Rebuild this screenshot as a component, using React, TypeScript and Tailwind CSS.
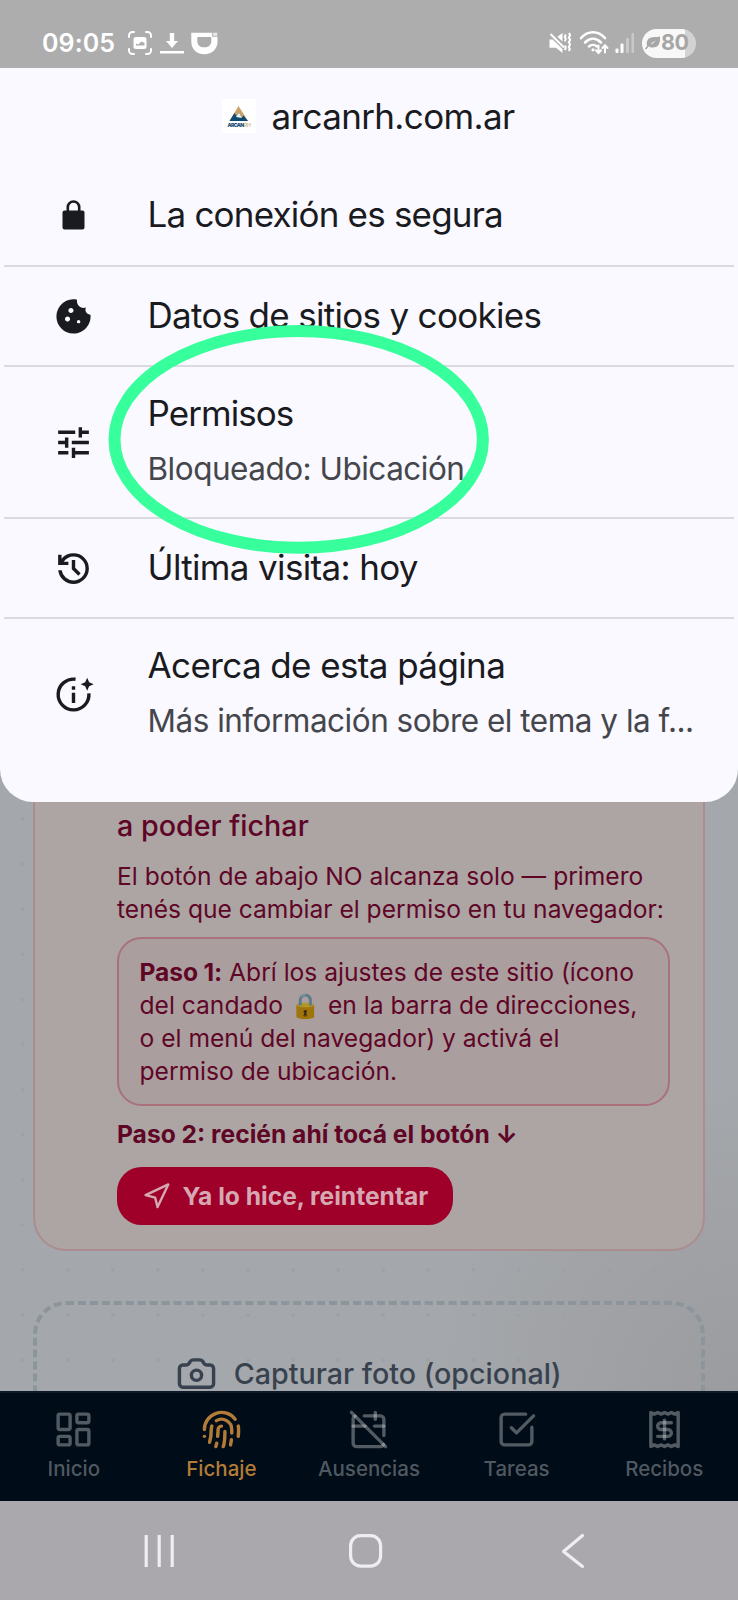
import type { ReactNode } from "react";
import {
  LayoutDashboard,
  Fingerprint,
  CalendarOff,
  SquareCheckBig,
  Receipt,
  Camera,
  Navigation,
} from "lucide-react";
import { MdCookie, MdTune } from "react-icons/md";

function StatusBar() {
  return (
    <header className="flex h-[68px] shrink-0 items-center justify-between bg-[#adadad] pt-[18px] pr-[42px] pl-[42px] text-white">
      <div className="flex items-center">
        <span className="w-[86px] text-[25px] leading-none font-semibold tracking-[0.100px] whitespace-nowrap">09:05</span>
        <svg width="24" height="24" viewBox="0 0 24 24" fill="none" stroke="currentColor" strokeWidth="2" strokeLinecap="round">
          <path d="M1 6V4.500a3.500 3.500 0 0 1 3.500-3.500H6M18 1h1.500A3.500 3.500 0 0 1 23 4.500V6M23 18v1.500a3.500 3.500 0 0 1-3.500 3.500H18M6 23H4.500A3.500 3.500 0 0 1 1 19.500V18" />
          <rect x="5.500" y="6" width="13" height="12" rx="2.500" fill="currentColor" stroke="none" />
          <path d="M8 14.500v-2l2.200 1 3.300-3 3 1.500v2.500z" fill="#adadad" stroke="none" />
        </svg>
        <svg className="ml-[8px]" width="24" height="24" viewBox="0 0 24 24" fill="currentColor">
          <path d="M9.800 2h4.400v8H18l-6 7-6-7h3.800z" />
          <rect x="0" y="20" width="24" height="2.500" />
        </svg>
        <svg className="ml-[6.500px]" width="27" height="24" viewBox="0 0 27 24" fill="currentColor">
          <path fillRule="evenodd" d="M.3 1.700H21.200V5.800H26.500V10.500C26.500 18 21 23.300 13.300 23.300 5.500 23.300.3 18 .3 10.500ZM6.300 6V10c0 4.200 2.700 6.300 7 6.300s7-2.100 7-6.300V6Z" />
          <path d="M22.200 1.700h4v3.100h-4z" opacity=".75" />
        </svg>
      </div>
      <div className="flex items-center">
        <svg width="22" height="22" viewBox="0 0 22 22" fill="currentColor">
          <path d="M.5 7.500h3.200L13.500 17V21L7 15.800H.5zM8.500 4.800 13.500 1v8.500z" />
          <path d="M1.500 2 15 15.500" stroke="currentColor" strokeWidth="2" />
          <path d="m20 1 1.200 2.300L19.800 5.600l1.400 2.300-1.400 2.300 1.400 2.300-1.400 2.300 1 2.200-1 2M16.800 2.500l-1 2.300 1 2.300-1 2.300M15.800 13.500l1 2.300-1 2.200" fill="none" stroke="currentColor" strokeWidth="2" />
        </svg>
        <svg className="ml-[8px]" width="31" height="24" viewBox="0 0 31 24" fill="none" stroke="currentColor" strokeWidth="2.500" strokeLinecap="round">
          <path d="M2 7.200C9-.6 19-.6 26 7.200M6 11.500c5-5 11-5 16 0M10 15.500c2.300-2 5.700-2 8 0" />
          <circle cx="14" cy="18.800" r="1.600" fill="currentColor" stroke="none" />
          <path d="M19.500 14.500v7M17 19.300l2.500 2.700 2.500-2.700M26 21.500v-6.500M23.500 17l2.500-2.700 2.500 2.700" strokeWidth="2" />
        </svg>
        <svg className="ml-[5px]" width="20" height="22" viewBox="0 0 20 22" fill="currentColor">
          <rect x="0.500" y="16.500" width="3" height="4.500" rx="1" />
          <rect x="5.500" y="11.500" width="3" height="9.500" rx="1" />
          <rect x="11" y="6" width="3" height="15" rx="1" opacity=".35" />
          <rect x="16.500" y="1" width="2.500" height="20" rx="1" opacity=".35" />
        </svg>
        <div className="ml-[7px] flex h-[29px] w-[54px] items-center overflow-hidden rounded-full bg-linear-to-r from-[#f8f8f8] from-80% to-[#d3d3d3] to-80% pl-[3px] text-[#a6a6a6]">
          <svg width="16" height="16" viewBox="0 0 16 16" fill="currentColor">
            <path d="M15 1.500C15.500 9 13 13 7 12.500c-1.500 0-2.500-.5-3.300-1C6 9.500 8.500 8 11 5.500 7 7.500 4.500 9 2.200 11.200.7 6 3 2.500 8 2.200 11 2 13 2 15 1.500z" />
            <path d="M.5 14c1.300-2 3.500-4 6-5.500" stroke="currentColor" strokeWidth="1.500" />
          </svg>
          <span className="text-[21.500px] leading-none font-bold tracking-[-0.400px]">80</span>
        </div>
      </div>
    </header>
  );
}

function Favicon() {
  return (
    <svg className="mr-[16px] shrink-0" width="34" height="34" viewBox="0 0 34 34">
      <rect width="34" height="34" fill="#fff" />
      <path d="M16.500 7 26 22H7.500z" fill="#cba266" />
      <path d="m12.500 14 2 3 2.500-3.500 2.800 5 1.700-2L26 22H7.500z" fill="#0f4a70" />
      <path d="m14 18 3-4.500 3 5.500z" fill="#eef3f5" />
      <text x="5.500" y="27.500" fontSize="5.200" fontWeight="900" fill="#1c5074" textLength="16" lengthAdjust="spacingAndGlyphs">ARCAN</text>
      <text x="21.700" y="27.500" fontSize="5.200" fontWeight="700" fill="#d8c6a4" textLength="6.500" lengthAdjust="spacingAndGlyphs">RH</text>
    </svg>
  );
}

function LockIcon() {
  return (
    <svg width="41" height="41" viewBox="0 0 41 41" fill="currentColor">
      <rect x="9.500" y="15.500" width="22" height="19" rx="2" />
      <path d="M14.800 16.500v-4.300a5.700 5.700 0 0 1 11.400 0v4.300" fill="none" stroke="currentColor" strokeWidth="2.600" />
    </svg>
  );
}

function HistoryIcon() {
  return (
    <svg width="41" height="41" viewBox="0 -960 960 960" fill="currentColor">
      <path d="M480-120q-138 0-240.500-91.500T122-440h82q14 104 92.500 172T480-200q117 0 198.500-81.500T760-480q0-117-81.500-198.500T480-760q-69 0-129 32t-101 88h110v80H120v-240h80v94q51-64 124.500-99T480-840q75 0 140.500 28.500t114 77q48.500 48.500 77 114T840-480q0 75-28.500 140.500t-77 114q-48.500 48.500-114 77T480-120Zm112-192L440-464v-216h80v184l128 128-56 56Z" />
    </svg>
  );
}

function InfoSparkIcon() {
  return (
    <svg width="41" height="41" viewBox="0 0 24 24" fill="currentColor">
      <path d="M13.200 3.080A9 9 0 1 0 21 11.300" fill="none" stroke="currentColor" strokeWidth="2" />
      <path d="M11 11h2v6h-2zM11 7.200h2v2h-2z" />
      <path d="M20 2.200l1.150 2.650L23.800 6l-2.650 1.150L20 9.800l-1.150-2.650L16.200 6l2.650-1.150z" />
    </svg>
  );
}

type RowProps = { icon: ReactNode; title: string; detail?: string; className: string };

function SheetRow({ icon, title, detail, className }: RowProps) {
  return (
    <div className={`mx-[4px] flex items-center pl-[49px] ${className}`}>
      <span className="flex w-[41px] shrink-0 justify-center text-[#1a1b21]">{icon}</span>
      <div className="ml-[53.500px] whitespace-nowrap">
        <div className="relative -top-px text-[35px] leading-[55px] text-[#1a1b21]">{title}</div>
        {detail && (
          <div className="relative -top-px text-[31.500px] leading-[55px] tracking-[-0.500px] text-[#45464c]">{detail}</div>
        )}
      </div>
    </div>
  );
}

function SiteInfoSheet() {
  return (
    <section className="relative h-[734px] shrink-0 rounded-b-[33px] bg-[#f9f9ff]">
      <div className="flex h-[97px] items-center justify-center pr-[2px] pb-px text-[35px] tracking-[-0.650px] text-[#1a1b21]">
        <Favicon />
        <span>arcanrh.com.ar</span>
      </div>
      <SheetRow className="h-[102px] border-b-2 border-[#dadae0] tracking-[-0.800px]" icon={<LockIcon />} title="La conexión es segura" />
      <SheetRow className="h-[100px] border-b-2 border-[#dadae0] tracking-[-0.700px]" icon={<MdCookie size={41} />} title="Datos de sitios y cookies" />
      <SheetRow className="h-[152px] border-b-2 border-[#dadae0] tracking-[-0.950px]" icon={<MdTune size={41} />} title="Permisos" detail="Bloqueado: Ubicación" />
      <SheetRow className="h-[100px] border-b-2 border-[#dadae0] tracking-[-0.650px]" icon={<HistoryIcon />} title="Última visita: hoy" />
      <SheetRow className="h-[150px] tracking-[-0.600px]" icon={<InfoSparkIcon />} title="Acerca de esta página" detail="Más información sobre el tema y la f..." />
      <svg className="absolute top-[256px] left-[107px]" width="384" height="231" viewBox="0 0 384 231" fill="none">
        <ellipse cx="191.700" cy="115.400" rx="184.200" ry="108.400" stroke="#36ff9c" strokeWidth="12" />
      </svg>
    </section>
  );
}

function PermissionCard() {
  return (
    <section className="mx-[33px] h-[449px] shrink-0 rounded-b-[33px] border-2 border-t-0 border-[#ab8d8f] bg-[#aca5a3] pt-[3px] pr-[33px] pl-[82px] text-[24.600px] leading-[33px] text-[#5f0627]">
      <h2 className="text-[28.700px] leading-[41px] font-medium">a poder fichar</h2>
      <p className="mt-[14px] whitespace-nowrap">
        El botón de abajo NO alcanza solo — primero
        <br />
        tenés que cambiar el permiso en tu navegador:
      </p>
      <div className="mt-[11.300px] rounded-[24.600px] border-2 border-[#a9717b] bg-[#ab9e9f] px-[20.500px] pt-[17.200px] pb-[15.200px] whitespace-nowrap">
        <strong className="font-bold tracking-[-0.100px]">Paso 1:</strong> Abrí los ajustes de este sitio (ícono
        <br />
        del candado <span className="brightness-[.7]">🔒</span> en la barra de direcciones,
        <br />
        o el menú del navegador) y activá el
        <br />
        permiso de ubicación.
      </div>
      <p className="mt-[12.300px] font-bold">Paso 2: recién ahí tocá el botón ↓</p>
      <button className="mt-[16.400px] flex h-[57.500px] w-[336px] items-center gap-[12.300px] rounded-[24.600px] bg-[#9e0029] px-[24.600px] font-bold whitespace-nowrap text-[#d6a8b2]">
        <Navigation className="shrink-0" size={28.7} strokeWidth={2} />
        Ya lo hice, reintentar
      </button>
    </section>
  );
}

const tabs = [
  { label: "Inicio", Icon: LayoutDashboard, active: false },
  { label: "Fichaje", Icon: Fingerprint, active: true },
  { label: "Ausencias", Icon: CalendarOff, active: false },
  { label: "Tareas", Icon: SquareCheckBig, active: false },
  { label: "Recibos", Icon: Receipt, active: false },
];

function TabBar() {
  return (
    <nav className="grid h-[110px] shrink-0 grid-cols-5 border-t-2 border-[#0e1a27] bg-[#000c18]">
      {tabs.map(({ label, Icon, active }) => (
        <div
          key={label}
          className={`flex flex-col items-center pt-[16px] text-[20.500px] leading-[30px] font-medium ${active ? "text-[#b37c36]" : "text-[#ffffff52]"}`}
        >
          <Icon size={41} strokeWidth={2} />
          <span className="mt-[3.500px]">{label}</span>
        </div>
      ))}
    </nav>
  );
}

function SystemNav() {
  return (
    <footer className="flex h-[99px] shrink-0 items-start bg-[#aaa8ad] pt-[32px] pl-[144px]">
      <svg width="442" height="36" viewBox="0 0 442 36" fill="none" stroke="#ededf2" strokeWidth="3.200">
        <path d="M2.200 2v32M15.200 2v32M28.200 2v32" />
        <rect x="206.600" y="2.600" width="30" height="30.500" rx="10" />
        <path d="m438.500 2.500-19 16 19 15" strokeLinecap="round" strokeLinejoin="round" />
      </svg>
    </footer>
  );
}

export default function App() {
  return (
    <div className="flex h-[1600px] w-[738px] flex-col overflow-hidden font-['Inter','Noto_Sans',sans-serif]">
      <StatusBar />
      <main className="flex h-[1323px] shrink-0 flex-col overflow-hidden bg-[#a4a7ab] bg-[radial-gradient(circle,#9ca0a5_1px,transparent_2.500px),radial-gradient(circle_at_100%_100%,#9b9c9f,transparent_20%)] bg-[size:45.100px_45.100px,100%_100%] bg-[position:0_7px,0_0]">
        <SiteInfoSheet />
        <PermissionCard />
        <section className="mx-[33px] mt-[49.500px] flex h-[200px] shrink-0 justify-center rounded-[33px] border-4 border-dashed border-[#8c949c] pt-[48px] text-[28.700px] leading-[41px] font-medium text-[#38424f]">
          <Camera size={41} strokeWidth={2} />
          <span className="ml-[16.400px]">Capturar foto (opcional)</span>
        </section>
      </main>
      <TabBar />
      <SystemNav />
    </div>
  );
}
